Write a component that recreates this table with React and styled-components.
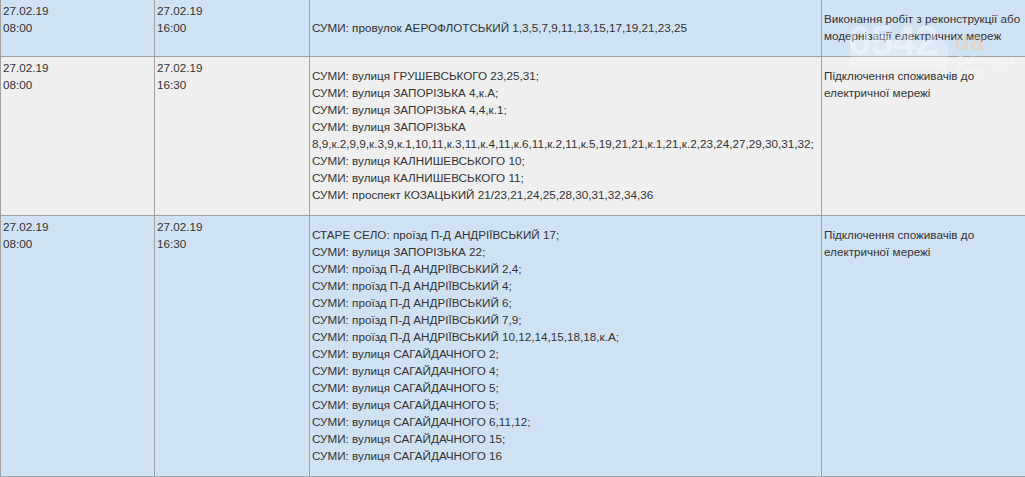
import React from "react";
import styled, { createGlobalStyle } from "styled-components";

const Global = createGlobalStyle`
  html, body { margin: 0; padding: 0; background: #ffffff; overflow: hidden; }
  body { font-family: "Liberation Sans", Arial, sans-serif; }
`;

const Page = styled.div`
  position: relative;
  width: 1025px;
  height: 477px;
  overflow: hidden;
`;

const Table = styled.table`
  border-collapse: collapse;
  table-layout: fixed;
  width: 1025px;
  margin-top: -1px;
  font-family: "Liberation Sans", Arial, sans-serif;
  font-size: 11.7px;
  line-height: 17px;
  color: #333333;
`;

const Col = styled.col`
  width: ${(p) => p.$w}px;
`;

const Row = styled.tr`
  background: ${(p) => (p.$tone === "blue" ? "#cfe2f3" : "#efefef")};
`;

const Cell = styled.td`
  border: 1px solid #a2a2a2;
  padding: 2px;
  vertical-align: top;
  text-align: left;
`;

const TextCell = styled(Cell)`
  padding: 10px 2px 12px;
  vertical-align: ${(p) => (p.$middle ? "middle" : "top")};
`;

const Watermark = styled.div`
  position: absolute;
  left: 846px;
  top: 12px;
  width: 170px;
  height: 64px;
  pointer-events: none;
`;

const Bubble = styled.svg`
  position: absolute;
  left: 4px;
  top: 26px;
`;

const Digits = styled.span`
  position: absolute;
  left: 2px;
  top: 8px;
  font-family: "Liberation Sans", Arial, sans-serif;
  font-weight: 700;
  font-size: 42px;
  line-height: 1;
  letter-spacing: -1px;
  color: rgba(255, 255, 255, 0.4);
`;

const Domain = styled.span`
  position: absolute;
  left: 108px;
  top: 16px;
  font-family: "Liberation Sans", Arial, sans-serif;
  font-weight: 700;
  font-size: 26px;
  line-height: 1;
  color: rgba(255, 196, 140, 0.4);
`;

const Tagline = styled.span`
  position: absolute;
  left: 111px;
  top: 44px;
  font-family: "Liberation Sans", Arial, sans-serif;
  font-size: 10px;
  line-height: 9px;
  color: rgba(255, 255, 255, 0.5);
`;

const rows = [
  {
    tone: "blue",
    start: ["27.02.19", "08:00"],
    end: ["27.02.19", "16:00"],
    addr: ["СУМИ: провулок АЕРОФЛОТСЬКИЙ 1,3,5,7,9,11,13,15,17,19,21,23,25"],
    desc: "Виконання робіт з реконструкції або модернізації електричних мереж",
    middle: true,
  },
  {
    tone: "gray",
    start: ["27.02.19", "08:00"],
    end: ["27.02.19", "16:30"],
    addr: [
      "СУМИ: вулиця ГРУШЕВСЬКОГО 23,25,31;",
      "СУМИ: вулиця ЗАПОРІЗЬКА 4,к.А;",
      "СУМИ: вулиця ЗАПОРІЗЬКА 4,4,к.1;",
      "СУМИ: вулиця ЗАПОРІЗЬКА 8,9,к.2,9,9,к.3,9,к.1,10,11,к.3,11,к.4,11,к.6,11,к.2,11,к.5,19,21,21,к.1,21,к.2,23,24,27,29,30,31,32;",
      "СУМИ: вулиця КАЛНИШЕВСЬКОГО 10;",
      "СУМИ: вулиця КАЛНИШЕВСЬКОГО 11;",
      "СУМИ: проспект КОЗАЦЬКИЙ 21/23,21,24,25,28,30,31,32,34,36",
    ],
    desc: "Підключення споживачів до електричної мережі",
  },
  {
    tone: "blue",
    start: ["27.02.19", "08:00"],
    end: ["27.02.19", "16:30"],
    addr: [
      "СТАРЕ СЕЛО: проїзд П-Д АНДРІЇВСЬКИЙ 17;",
      "СУМИ: вулиця ЗАПОРІЗЬКА 22;",
      "СУМИ: проїзд П-Д АНДРІЇВСЬКИЙ 2,4;",
      "СУМИ: проїзд П-Д АНДРІЇВСЬКИЙ 4;",
      "СУМИ: проїзд П-Д АНДРІЇВСЬКИЙ 6;",
      "СУМИ: проїзд П-Д АНДРІЇВСЬКИЙ 7,9;",
      "СУМИ: проїзд П-Д АНДРІЇВСЬКИЙ 10,12,14,15,18,18,к.А;",
      "СУМИ: вулиця САГАЙДАЧНОГО 2;",
      "СУМИ: вулиця САГАЙДАЧНОГО 4;",
      "СУМИ: вулиця САГАЙДАЧНОГО 5;",
      "СУМИ: вулиця САГАЙДАЧНОГО 5;",
      "СУМИ: вулиця САГАЙДАЧНОГО 6,11,12;",
      "СУМИ: вулиця САГАЙДАЧНОГО 15;",
      "СУМИ: вулиця САГАЙДАЧНОГО 16",
    ],
    desc: "Підключення споживачів до електричної мережі",
  },
];

const Lines = ({ items }) =>
  items.map((t, i) => (
    <React.Fragment key={i}>
      {i > 0 && <br />}
      {t}
    </React.Fragment>
  ));

export default function App() {
  return (
    <>
      <Global />
      <Page>
        <Table>
          <colgroup>
            <Col $w={154} />
            <Col $w={155} />
            <Col $w={512} />
            <Col $w={204} />
          </colgroup>
          <tbody>
            {rows.map((r, i) => (
              <Row key={i} $tone={r.tone}>
                <Cell>
                  <Lines items={r.start} />
                </Cell>
                <Cell>
                  <Lines items={r.end} />
                </Cell>
                <TextCell $middle={r.middle}>
                  <Lines items={r.addr} />
                </TextCell>
                <TextCell>{r.desc}</TextCell>
              </Row>
            ))}
          </tbody>
        </Table>
        <Watermark aria-hidden="true">
          <Bubble width="100" height="36" viewBox="0 0 100 36">
            <path
              d="M8 2 H90 Q98 2 98 10 V22 Q98 30 90 30 H96 L96 35 L88 30 H8 Q0 30 0 22 V10 Q0 2 8 2 Z"
              fill="rgba(255,255,255,0.25)"
            />
          </Bubble>
          <Digits>0542</Digits>
          <Domain>ua</Domain>
          <Tagline>
            Сайт города
            <br />
            Сумы
          </Tagline>
        </Watermark>
      </Page>
    </>
  );
}
